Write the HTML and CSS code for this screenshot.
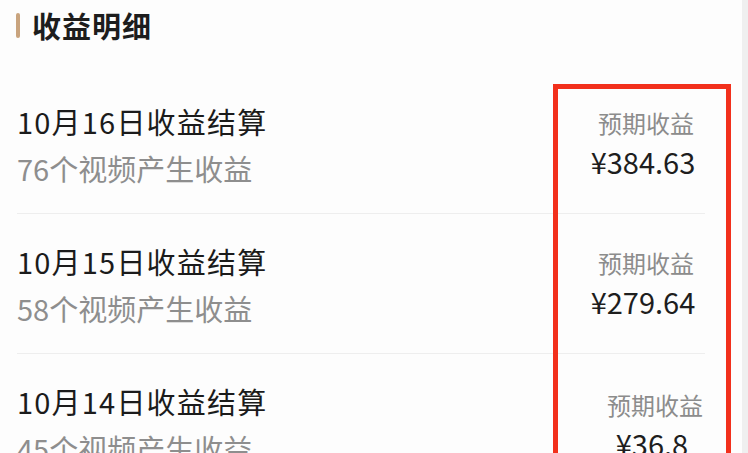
FILE: index.html
```html
<!DOCTYPE html>
<html lang="zh-CN">
<head>
<meta charset="utf-8">
<title>收益明细</title>
<link rel="stylesheet" href="styles.css">
</head>
<body>
<div class="screen">
  <main class="content">
    <header class="section-head">
      <span class="accent"></span>
      <h1 class="section-title">收益明细</h1>
    </header>
    <ul class="list">
      <li class="row">
        <div class="info">
          <div class="row-title">10月16日收益结算</div>
          <div class="row-sub">76个视频产生收益</div>
        </div>
        <div class="earn">
          <div class="earn-label">预期收益</div>
          <div class="earn-amount">¥384.63</div>
        </div>
      </li>
      <li class="row">
        <div class="info">
          <div class="row-title">10月15日收益结算</div>
          <div class="row-sub">58个视频产生收益</div>
        </div>
        <div class="earn">
          <div class="earn-label">预期收益</div>
          <div class="earn-amount">¥279.64</div>
        </div>
      </li>
      <li class="row">
        <div class="info">
          <div class="row-title">10月14日收益结算</div>
          <div class="row-sub">45个视频产生收益</div>
        </div>
        <div class="earn earn-shift">
          <div class="earn-label">预期收益</div>
          <div class="earn-amount">¥36.8</div>
        </div>
      </li>
    </ul>
  </main>
  <div class="edge"></div>
  <div class="highlight"></div>
</div>
</body>
</html>
```

FILE: styles.css
```css
html, body {
  margin: 0;
  padding: 0;
}
body {
  width: 748px;
  height: 453px;
  overflow: hidden;
  background: #fdfdfd;
  font-family: "Noto Sans CJK SC", "Noto Sans", sans-serif;
}
.screen {
  position: relative;
  display: flex;
  width: 748px;
  height: 453px;
  overflow: hidden;
}
.content {
  flex: 1;
}
.edge {
  width: 6px;
  background: #efefef;
}
.section-head {
  display: flex;
  align-items: center;
  gap: 12px;
  height: 50px;
  padding-left: 16px;
  margin-bottom: 24px;
}
.accent {
  width: 4px;
  height: 25px;
  border-radius: 2px;
  background: #c9a47e;
}
.section-title {
  margin: 0;
  font-size: 29px;
  font-weight: 700;
  color: #1d1d1d;
  letter-spacing: 1px;
}
.list {
  list-style: none;
  margin: 0 37px 0 17px;
  padding: 0;
}
.row {
  display: flex;
  justify-content: space-between;
  align-items: flex-start;
  padding: 25px 0 20px;
  border-bottom: 1px solid #eeeeee;
}
.info {
  display: flex;
  flex-direction: column;
}
.row-title {
  font-size: 29px;
  line-height: 44px;
  color: #1b1b1b;
  letter-spacing: 1.2px;
}
.row-sub {
  font-size: 29px;
  line-height: 50px;
  color: #8e8e8e;
}
.earn {
  width: 118px;
  padding-top: 6px;
  display: flex;
  flex-direction: column;
  align-items: center;
}
.earn-shift {
  margin-right: -9px;
  padding-top: 8px;
}
.earn-label {
  font-size: 24px;
  line-height: 36px;
  color: #8c8c8c;
}
.earn-amount {
  font-size: 29px;
  line-height: 40px;
  color: #1e1e1e;
  margin-right: 6px;
}
.highlight {
  position: absolute;
  left: 553px;
  top: 84px;
  width: 168px;
  height: 420px;
  border: 5px solid #f2301c;
}
```
